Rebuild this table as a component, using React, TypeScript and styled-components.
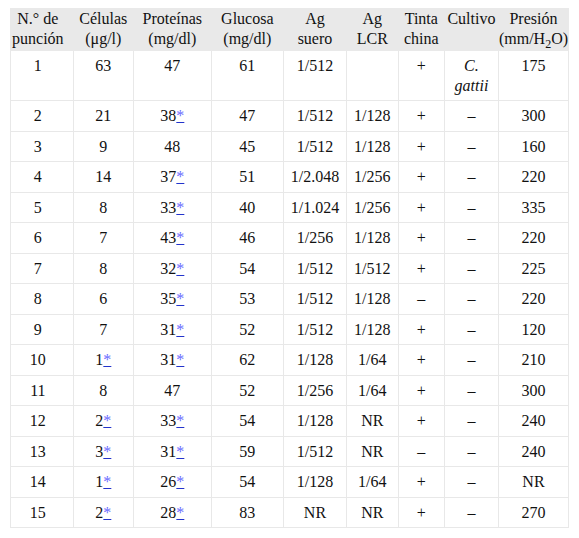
import React from 'react';
import styled, { createGlobalStyle } from 'styled-components';

const serif = `"Liberation Serif", Tinos, "Times New Roman", Times, serif`;

const GlobalStyle = createGlobalStyle`
  body {
    margin: 8px 10px;
    background: #fff;
    font-family: ${serif};
    color: #000;
  }
`;

const Table = styled.table`
  width: 559px;
  table-layout: fixed;
  border-collapse: collapse;
  font-family: ${serif};
  font-size: 16px;
  line-height: 19.5px;
  color: #111;
`;

const Col = styled.col<{ $w: number }>`
  width: ${({ $w }) => $w}px;
`;

const HeadCell = styled.th<{ $first?: boolean }>`
  background: #e9e9e9;
  border: 1px solid #e9e9e9;
  font-weight: normal;
  text-align: center;
  vertical-align: top;
  white-space: nowrap;
  padding: 0 ${({ $first }) => ($first ? '8px' : '0')} 2px 0;

  sub {
    font-size: 0.75em;
    line-height: 0;
  }
`;

const Cell = styled.td<{ $first?: boolean }>`
  border: 1px solid #e8e8e8;
  text-align: center;
  vertical-align: top;
  padding: 5px ${({ $first }) => ($first ? '8px' : '2px')} 5px ${({ $first }) => ($first ? '0' : '2px')};
`;

const Ref = styled.a`
  color: #6a6aff;
  text-decoration: underline;
  text-decoration-color: #2233cc;
`;

const Species = styled.i``;

const widths = [62.7, 60.3, 77.7, 72.3, 63, 51.7, 46.3, 54, 70];

const rows: string[][] = [
  ['1', '63', '47', '61', '1/512', '', '+', 'C. gattii', '175'],
  ['2', '21', '38*', '47', '1/512', '1/128', '+', '–', '300'],
  ['3', '9', '48', '45', '1/512', '1/128', '+', '–', '160'],
  ['4', '14', '37*', '51', '1/2.048', '1/256', '+', '–', '220'],
  ['5', '8', '33*', '40', '1/1.024', '1/256', '+', '–', '335'],
  ['6', '7', '43*', '46', '1/256', '1/128', '+', '–', '220'],
  ['7', '8', '32*', '54', '1/512', '1/512', '+', '–', '225'],
  ['8', '6', '35*', '53', '1/512', '1/128', '–', '–', '220'],
  ['9', '7', '31*', '52', '1/512', '1/128', '+', '–', '120'],
  ['10', '1*', '31*', '62', '1/128', '1/64', '+', '–', '210'],
  ['11', '8', '47', '52', '1/256', '1/64', '+', '–', '300'],
  ['12', '2*', '33*', '54', '1/128', 'NR', '+', '–', '240'],
  ['13', '3*', '31*', '59', '1/512', 'NR', '–', '–', '240'],
  ['14', '1*', '26*', '54', '1/128', '1/64', '+', '–', 'NR'],
  ['15', '2*', '28*', '83', 'NR', 'NR', '+', '–', '270'],
];

const renderValue = (value: string) => {
  if (value === 'C. gattii') {
    return (
      <Species>
        C.
        <br />
        gattii
      </Species>
    );
  }
  if (value.endsWith('*')) {
    return (
      <>
        {value.slice(0, -1)}
        <Ref href="#">*</Ref>
      </>
    );
  }
  return value;
};

export default function App() {
  return (
    <>
      <GlobalStyle />
      <Table>
        <colgroup>
          {widths.map((w, i) => (
            <Col key={i} $w={w} />
          ))}
        </colgroup>
        <thead>
          <tr>
            <HeadCell $first>N.° de<br />punción</HeadCell>
            <HeadCell>Células<br />(μg/l)</HeadCell>
            <HeadCell>Proteínas<br />(mg/dl)</HeadCell>
            <HeadCell>Glucosa<br />(mg/dl)</HeadCell>
            <HeadCell>Ag<br />suero</HeadCell>
            <HeadCell>Ag<br />LCR</HeadCell>
            <HeadCell>Tinta<br />china</HeadCell>
            <HeadCell>Cultivo</HeadCell>
            <HeadCell>
              Presión<br />(mm/H<sub>2</sub>O)
            </HeadCell>
          </tr>
        </thead>
        <tbody>
          {rows.map((row, r) => (
            <tr key={r}>
              {row.map((value, c) => (
                <Cell key={c} $first={c === 0}>
                  {renderValue(value)}
                </Cell>
              ))}
            </tr>
          ))}
        </tbody>
      </Table>
    </>
  );
}
